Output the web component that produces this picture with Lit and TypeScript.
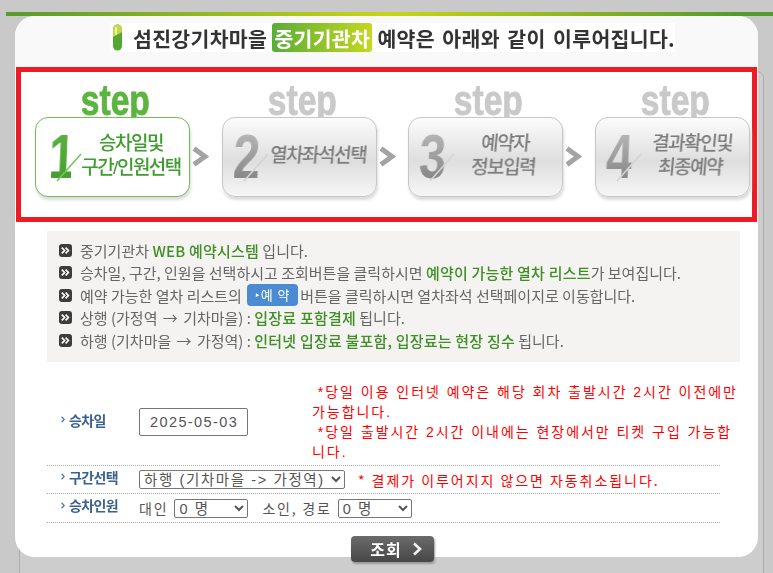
import { LitElement, html, css, svg } from "lit";
import { customElement } from "lit/decorators.js";

const steps = [
  { n: "1", lines: ["승차일및", "구간/인원선택"], active: true },
  { n: "2", lines: ["열차좌석선택"], active: false },
  { n: "3", lines: ["예약자", "정보입력"], active: false },
  { n: "4", lines: ["결과확인및", "최종예약"], active: false },
];

const bullet = html`<svg class="bullet" viewBox="0 0 13 13" width="13" height="13">
  <rect x="0" y="0" width="13" height="13" rx="3" fill="#3d3d3d"></rect>
  <path d="M2.8 3.6 L5.6 6.5 L2.8 9.4 M6.6 3.6 L9.4 6.5 L6.6 9.4" fill="none" stroke="#fff" stroke-width="1.7"></path>
</svg>`;

const chev = html`<svg class="chev" viewBox="0 0 4 7" width="4" height="7"><path d="M0.6 0.8 L3.2 3.5 L0.6 6.2" fill="none" stroke="#4a78a8" stroke-width="1.3"></path></svg>`;

@customElement("app-root")
export class AppRoot extends LitElement {
  static styles = css`
    :host { display: block; width: 773px; height: 573px; overflow: hidden; position: relative; background: #c9c9c9; font-family: "Noto Sans CJK KR", "Noto Sans", sans-serif; }
    .backdrop { position: absolute; left: 19px; top: 71px; width: 745px; height: 520px; background: #cdcdcd; border: 1px solid #adadad; border-radius: 7px; box-sizing: border-box; }
    .shell { position: relative; padding-top: 12px; }
    .topbar { height: 4px; margin-left: 6px; background: linear-gradient(90deg, #569a2e 0%, #c8d516 50%, #569a2e 95%); }
    .card { margin-left: 15px; width: 743px; height: 541px; background: #fff; border-radius: 20px; box-sizing: border-box; display: flex; flex-direction: column; }
    .card > * { flex: none; }
    .head { height: 51px; background: #f9f9f9; border-radius: 20px 20px 0 0; padding: 7px 0 0 95px; box-sizing: border-box; }
    .title { display: inline-flex; align-items: center; height: 29px; width: 565px; background: #fff; padding-left: 2px; box-sizing: border-box; font-size: 20.5px; font-weight: 700; color: #333; white-space: nowrap; filter: blur(0.35px); letter-spacing: 0.3px; }
    .pill { margin-right: 10px; flex: none; }
    .badge { display: inline-flex; align-items: center; justify-content: center; width: 101px; height: 29px; margin: 0 5px 0 5px; border-radius: 3px; color: #fff; background: linear-gradient(90deg, #5aad37, #c5d81e); }
    .sp { word-spacing: 2.5px; }

    .steps { box-sizing: border-box; height: 155px; margin-left: 1px; width: 741px; border: 5px solid #ed1c24; padding-left: 14px; display: flex; align-items: flex-start; }
    .step { width: 155px; flex: none; }
    .word { height: 45px; padding-left: 7px; box-sizing: border-box; text-align: center; font-family: "Liberation Sans", sans-serif; font-weight: 700; font-size: 42px; line-height: 57px; color: #c9c9c9; transform: scaleX(0.8); -webkit-text-stroke: 0.8px currentColor; filter: blur(0.4px); }
    .word.on { color: #5bb53f; }
    .box { position: relative; height: 80px; box-sizing: border-box; border: 1.5px solid #c6c6c6; border-radius: 13px; background: linear-gradient(180deg, #fcfcfc 0%, #dedede 55%, #f6f6f6 100%); box-shadow: 1px 3px 3px #dcdcdc; display: flex; align-items: center; }
    .box.on { border-color: #72bd54; background: #fff; }
    .digit { width: 44px; flex: none; padding-left: 11px; box-sizing: border-box; font-family: "Liberation Sans", sans-serif; font-weight: 700; font-size: 62px; line-height: 62px; transform: scaleX(0.78) skewX(-3deg); transform-origin: 8px 50%; background: linear-gradient(180deg, #bdbdbd, #7d7d7d); -webkit-background-clip: text; background-clip: text; color: transparent; filter: blur(0.3px); }
    .box.on .digit { background-image: linear-gradient(180deg, #5fb443, #3f9a2a); padding-left: 14px; }
    .slash { position: absolute; left: 20px; top: 34px; }
    .label { flex: 1; text-align: center; font-family: "Liberation Sans", "Noto Sans CJK KR", sans-serif; font-size: 19px; font-weight: 500; letter-spacing: -1.5px; line-height: 24px; color: #7b7b7b; filter: blur(0.35px); padding: 0 7px 3px 0; white-space: nowrap; transform: skewX(-5deg); }
    .box.on .label { color: #3f9d2f; transform: none; }
    .arrow-cell { width: 31.67px; flex: none; padding: 74px 0 0 2px; box-sizing: border-box; }

    .notice { margin: 9px 0 0 32px; width: 693px; height: 131px; box-sizing: border-box; background: #f4f3f2; padding: 8px 0 0 12px; display: flex; flex-direction: column; }
    .line { height: 22.5px; display: flex; align-items: center; gap: 8px; font-size: 15px; letter-spacing: 0; color: #666; white-space: nowrap; filter: blur(0.3px); flex: none; }
    .line b { font-weight: 500; color: #3f8f25; letter-spacing: 0.2px; }
    .txt { display: inline-flex; align-items: center; white-space: pre; }
    .ar { margin: 0 2px; }
    .rbtn { display: inline-block; width: 51px; height: 22px; margin: 0 2px; border-radius: 4px; background: #4b8bd3; color: #fff; font-size: 13px; line-height: 22px; text-align: center; letter-spacing: 1px; }
    .bullet { flex: none; }

    .form { margin: 20px 0 0 32px; width: 673px; }
    .row { display: grid; grid-template-columns: 92px 1fr; align-items: center; border-bottom: 1px dotted #aaa; box-sizing: border-box; }
    .r1 { height: 84px; align-items: start; }
    .r2 { height: 28px; }
    .r3 { height: 29px; }
    .lab { display: flex; align-items: center; gap: 4px; padding-left: 14px; font-size: 14px; font-weight: 700; letter-spacing: -0.6px; color: #3a6290; filter: blur(0.3px); height: 100%; box-sizing: border-box; padding-bottom: 6px; }
    .r1 .lab { padding-bottom: 8px; }
    .cell { display: flex; align-items: center; font-size: 14px; color: #555; letter-spacing: 1.8px; }
    .r1 .cell { align-items: flex-start; gap: 65px; }
    input { width: 109px; height: 28px; box-sizing: border-box; margin-top: 26px; flex: none; border: 1px solid #767676; border-radius: 2px; padding: 0 0 0 10px; font: 14.5px "Liberation Sans", sans-serif; letter-spacing: 1.4px; color: #555; background: #fff; }
    select { height: 19px; box-sizing: border-box; border: 1px solid #767676; border-radius: 2px; background: #fff; color: #555; font-family: "Liberation Sans", "Noto Sans CJK KR", sans-serif; font-size: 14.5px; line-height: 15px; letter-spacing: 1.6px; padding: 0; }
    .s-wide { width: 206px; }
    .s-n { width: 74px; }
    .note { width: 428px; flex: none; color: #f00; font-family: "Liberation Sans", "Noto Sans CJK KR", sans-serif; font-size: 14px; line-height: 20px; letter-spacing: 1.96px; margin: 0 0 0 -1px; }
    .note2 { color: #f00; margin-left: 13px; white-space: nowrap; letter-spacing: 1.95px; }
    .t1 { margin-right: 6px; }
    .t2 { margin: 0 6px 0 14px; }

    .go { align-self: flex-start; margin: 13px 0 0 336px; width: 83px; height: 26px; box-sizing: border-box; border: 0; border-radius: 4px; background: linear-gradient(180deg, #6b6b6b, #474747); box-shadow: 1px 2px 2px #999; color: #fff; display: flex; align-items: center; justify-content: center; gap: 10px; font-family: "Noto Sans CJK KR", sans-serif; font-weight: 700; font-size: 16px; letter-spacing: 1px; padding: 0 0 0 8px; }
    .go span { filter: blur(0.3px); }
  `;

  render() {
    return html`
      <div class="backdrop"></div>
      <div class="shell">
        <div class="topbar"></div>
        <div class="card">
          <div class="head">
            <div class="title">
              <svg class="pill" width="11" height="27" viewBox="0 0 11 27">
                <rect x="1" y="0.5" width="9" height="26" rx="4.5" fill="#54a72f"></rect>
                <path d="M1 13 V5 A4.5 4.5 0 0 1 10 5 V8 Z" fill="#c4d94a"></path>
                <rect x="3" y="3" width="2" height="8" rx="1" fill="#eef5b0"></rect>
              </svg>
              섬진강기차마을<span class="badge">중기기관차</span><span class="sp">예약은 아래와 같이 이루어집니다.</span>
            </div>
          </div>
          <div class="steps">
            ${steps.map(
              (s, i) => html`
                <div class="step">
                  <div class="word ${s.active ? "on" : ""}">step</div>
                  <div class="box ${s.active ? "on" : ""}">
                    <div class="digit">${s.n}</div>
                    <svg class="slash" width="28" height="30" viewBox="0 0 28 30">
                      ${svg`<path d="M1 29 L25 2" stroke="${s.active ? "#7cc261" : "#d4d4d4"}" stroke-width="1.6" fill="none"></path>`}
                    </svg>
                    <div class="label">${s.lines.map((l) => html`<div>${l}</div>`)}</div>
                  </div>
                </div>
                ${i < 3
                  ? html`<div class="arrow-cell">
                      <svg width="18" height="21" viewBox="0 0 18 21"><path d="M2 2.5 L13 10.5 L2 18.5" fill="none" stroke="#a3a3a3" stroke-width="5"></path></svg>
                    </div>`
                  : ""}
              `
            )}
          </div>
          <div class="notice">
            <div class="line">${bullet}<span class="txt">중기기관차 <b>WEB 예약시스템</b> 입니다.</span></div>
            <div class="line">${bullet}<span class="txt">승차일, 구간, 인원을 선택하시고 조회버튼을 클릭하시면 <b>예약이 가능한 열차 리스트</b>가 보여집니다.</span></div>
            <div class="line">${bullet}<span class="txt">예약 가능한 열차 리스트의 <span class="rbtn">‣예 약</span>버튼을 클릭하시면 열차좌석 선택페이지로 이동합니다.</span></div>
            <div class="line">${bullet}<span class="txt">상행 (가정역 <span class="ar">→</span> 기차마을) : <b>입장료 포함결제</b> 됩니다.</span></div>
            <div class="line">${bullet}<span class="txt">하행 (기차마을 <span class="ar">→</span> 가정역) : <b>인터넷 입장료 불포함, 입장료는 현장 징수</b> 됩니다.</span></div>
          </div>
          <div class="form">
            <div class="row r1">
              <div class="lab">${chev}승차일</div>
              <div class="cell">
                <input type="text" .value=${"2025-05-03"} />
                <div class="note">
                  &nbsp;*당일 이용 인터넷 예약은 해당 회차 출발시간 2시간 이전에만 가능합니다.<br />
                  &nbsp;*당일 출발시간 2시간 이내에는 현장에서만 티켓 구입 가능합니다.
                </div>
              </div>
            </div>
            <div class="row r2">
              <div class="lab">${chev}구간선택</div>
              <div class="cell">
                <select class="s-wide"><option>하행 (기차마을 -> 가정역)</option></select>
                <span class="note2">* 결제가 이루어지지 않으면 자동취소됩니다.</span>
              </div>
            </div>
            <div class="row r3">
              <div class="lab">${chev}승차인원</div>
              <div class="cell">
                <span class="t1">대인</span>
                <select class="s-n"><option>0 명</option></select>
                <span class="t2">소인, 경로</span>
                <select class="s-n"><option>0 명</option></select>
              </div>
            </div>
          </div>
          <button class="go"><span>조회</span>
            <svg width="11" height="14" viewBox="0 0 11 14"><path d="M2 1.5 L8 7 L2 12.5" fill="none" stroke="#f2f2f2" stroke-width="2.6"></path></svg>
          </button>
        </div>
      </div>
    `;
  }
}
